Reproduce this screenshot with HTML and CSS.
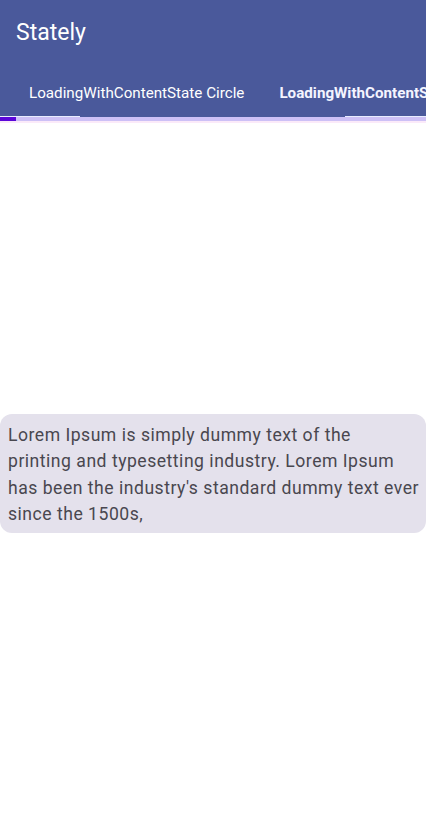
FILE: index.html
```html
<!DOCTYPE html>
<html>
<head>
<meta charset="utf-8">
<link rel="stylesheet" href="styles.css">
</head>
<body>
<header class="appbar">
  <div class="toolbar"><h1 class="title">Stately</h1></div>
  <nav class="tabs">
    <div class="tab">LoadingWithContentState Circle</div>
    <div class="tab tab-active">LoadingWithContentState Linear</div>
  </nav>
  <div class="indicator">
    <span class="ind-left"></span>
    <span class="ind-right"></span>
  </div>
</header>
<div class="progress"><span class="progress-fill"></span></div>
<div class="progress-shadow"></div>
<main class="content">
  <div class="card">Lorem Ipsum is simply dummy text of the<br>printing and typesetting industry. Lorem Ipsum<br>has been the industry's standard dummy text ever<br>since the 1500s,</div>
</main>
</body>
</html>
```
FILE: styles.css
```css
html, body {
  margin: 0;
  padding: 0;
  background: #ffffff;
  font-family: Roboto, "Noto Sans", sans-serif;
  width: 426px;
  height: 824px;
  overflow: hidden;
}
.appbar {
  background: #4a599b;
  color: #ffffff;
}
.toolbar {
  height: 64px;
  display: flex;
  align-items: center;
  padding-left: 16px;
}
.title {
  margin: 0;
  font-size: 23px;
  font-weight: 400;
  letter-spacing: 0;
}
.tabs {
  height: 52px;
  box-sizing: border-box;
  padding-top: 5px;
  display: flex;
  align-items: center;
  white-space: nowrap;
  overflow: hidden;
  padding-left: 29px;
  gap: 35px;
  font-size: 15.2px;
}
.tab {
  color: #ffffff;
  flex: none;
}
.tab-active {
  font-weight: 700;
  color: #f4f4ff;
}
.indicator {
  height: 1px;
  display: flex;
  justify-content: space-between;
}
.ind-left {
  width: 80px;
  background: #e8ecff;
}
.ind-right {
  width: 81px;
  background: #e8ecff;
}
.progress {
  height: 4px;
  background: #cdc0f6;
  display: flex;
}
.progress-fill {
  width: 16px;
  background: #5b06d9;
}
.progress-shadow {
  height: 2px;
  background: #fbeaf9;
}
.content {
  height: 701px;
  display: flex;
  align-items: center;
}
.card {
  width: 100%;
  box-sizing: border-box;
  background: #e4e1ec;
  border-radius: 12px;
  padding: 8px 0 6px 8px;
  color: #49474f;
  font-size: 17.6px;
  line-height: 26.3px;
  letter-spacing: 0.5px;
  white-space: nowrap;
}
```
